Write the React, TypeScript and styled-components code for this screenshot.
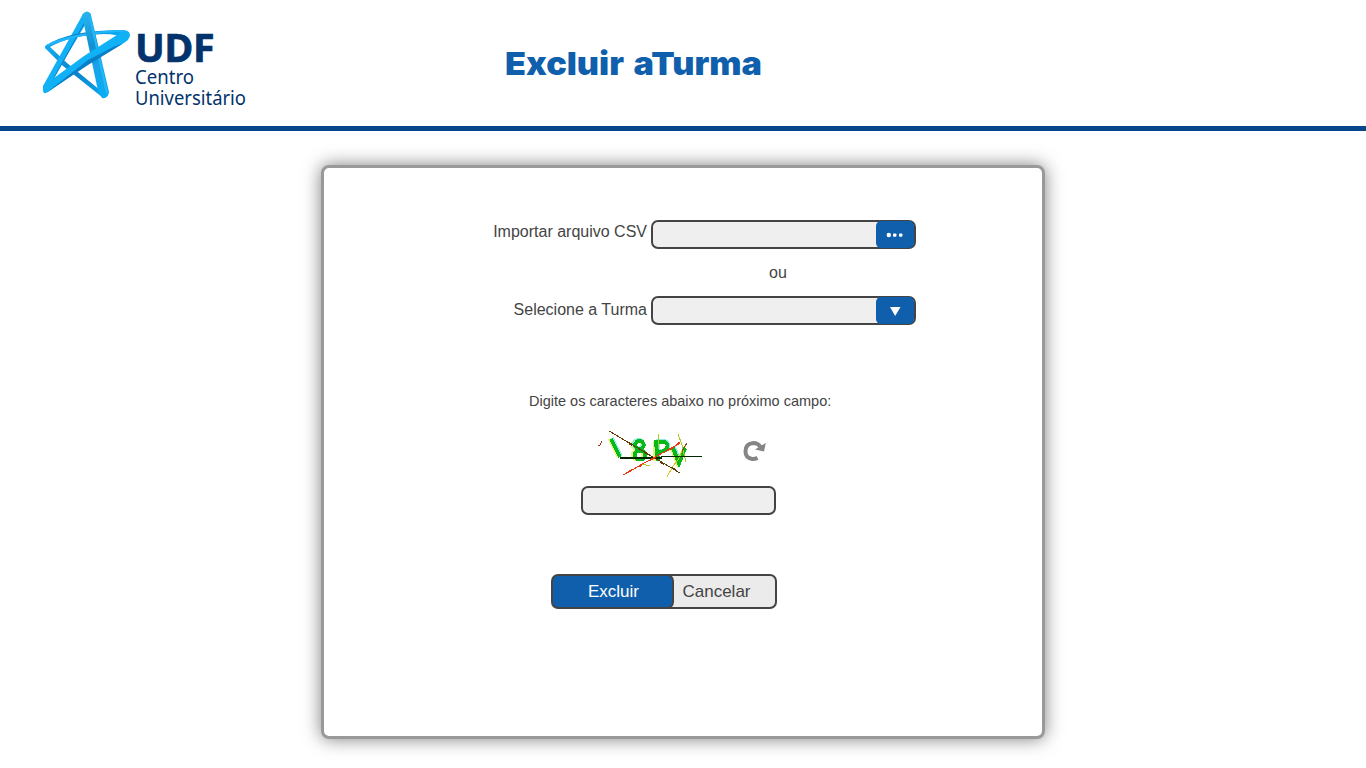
import React from "react";
import styled, { createGlobalStyle } from "styled-components";

const GlobalStyle = createGlobalStyle`
  * { box-sizing: border-box; }
  body { margin: 0; background: #fff; font-family: "Liberation Sans", Arial, sans-serif; color: #444; overflow: hidden; }
`;

const Page = styled.div`
  height: 768px;
  overflow: hidden;
`;

const Header = styled.header`
  display: flex;
  align-items: flex-start;
  height: 131px;
  border-bottom: 5px solid #08468c;
`;

const Logo = styled.svg`
  flex: none;
  width: 260px;
  height: 126px;
`;

const Title = styled.h1`
  margin: 46px 0 0 244.5px;
  font-family: Inter, "Liberation Sans", sans-serif;
  font-size: 32px;
  line-height: 36px;
  font-weight: 900;
  word-spacing: 2.5px;
  white-space: nowrap;
  color: #0f5fac;
  transform: scaleX(1.068);
  transform-origin: 0 0;
`;

const Card = styled.main`
  display: flex;
  flex-direction: column;
  width: 724px;
  height: 574px;
  margin: 34px auto 0;
  padding-top: 52px;
  border: 3px solid #999;
  border-radius: 8px;
  background: #fff;
  box-shadow: 0 0 18px rgba(0, 0, 0, 0.5);
`;

const FieldRow = styled.div`
  display: flex;
  height: 29px;
`;

const Label = styled.label<{ $top: number }>`
  width: 323px;
  padding-top: ${(p) => p.$top}px;
  margin-right: 4px;
  font-size: 16px;
  line-height: 18px;
  text-align: right;
  white-space: nowrap;
`;

const Field = styled.div<{ $width: number }>`
  display: flex;
  justify-content: flex-end;
  width: ${(p) => p.$width}px;
  height: 29px;
  border: 2px solid #444;
  border-radius: 7px;
  background: #efefef;
`;

const FieldButton = styled.button`
  width: 38px;
  height: 27px;
  margin: -1px 0;
  padding: 0;
  border: 0;
  border-radius: 5px;
  background: #0f5fac;
  svg { display: block; }
`;

const Separator = styled.div`
  height: 47px;
  padding: 15px 0 0 445px;
  font-size: 16px;
  line-height: 18px;
`;

const Hint = styled.p`
  margin: 67px 0 0 205px;
  font-size: 14.5px;
  line-height: 18px;
  white-space: nowrap;
`;

const CaptchaRow = styled.div`
  display: flex;
  margin: 15px 0 0 266px;
  height: 60px;
  svg { display: block; }
`;

const CodeField = styled(Field)`
  margin: 1px 0 0 257px;
`;

const Actions = styled.div`
  display: flex;
  margin: 59px 0 0 227px;
  height: 35px;
`;

const Action = styled.button<{ $primary?: boolean }>`
  position: relative;
  z-index: ${(p) => (p.$primary ? 1 : 0)};
  width: ${(p) => (p.$primary ? 123 : 119)}px;
  height: 35px;
  margin-left: ${(p) => (p.$primary ? 0 : -16)}px;
  padding: ${(p) => (p.$primary ? "0 0 0 2px" : "0 2px 0 0")};
  border: 2px solid #444;
  border-radius: 7px;
  background: ${(p) => (p.$primary ? "#0f5fac" : "#ebebeb")};
  color: ${(p) => (p.$primary ? "#fff" : "#444")};
  font: 17px/20px "Liberation Sans", Arial, sans-serif;
`;

const BrandLogo = () => (
  <Logo viewBox="0 0 260 126" role="img">
    <defs>
      <linearGradient id="edge" gradientUnits="userSpaceOnUse" x1="45" y1="47" x2="129" y2="33">
        <stop offset="0" stopColor="#0ea9f2" />
        <stop offset=".28" stopColor="#0b8cd2" />
        <stop offset=".5" stopColor="#0875b5" />
        <stop offset=".8" stopColor="#0aa5f0" />
      </linearGradient>
      <linearGradient id="thin" gradientUnits="userSpaceOnUse" x1="46" y1="48" x2="104" y2="97">
        <stop offset="0" stopColor="#13aaf0" />
        <stop offset=".5" stopColor="#0a83c9" />
        <stop offset="1" stopColor="#08a5f0" />
      </linearGradient>
      <linearGradient id="fall" gradientUnits="userSpaceOnUse" x1="87" y1="12" x2="104" y2="97">
        <stop offset="0" stopColor="#27b5ee" />
        <stop offset=".4" stopColor="#0f90d3" />
        <stop offset=".65" stopColor="#18a5e8" />
        <stop offset="1" stopColor="#08adf5" />
      </linearGradient>
    </defs>
    <path d="M45 48L63 66L102 97L106 95L67 63L49 46Z" fill="url(#thin)" />
    <path d="M83 14L43 86L46 91L49 86L88 20L91 14Q87 9 83 14Z" fill="#12b0f7" />
    <path d="M85 22L50 85" stroke="#087fc4" strokeWidth="1" />
    <path d="M45 46Q68 30 124 30Q130 31 129 37L121 38Q118 34 104 34Q70 35 48 48Q45 50 45 46Z" fill="url(#edge)" />
    <path d="M46 45Q75 31 124 30L126 32Q84 32 48 46Z" fill="#20b8fa" />
    <path d="M82 15Q87 9 91 15L109 92Q108 99 102 98L98 91Z" fill="url(#fall)" />
    <path d="M90 17L107 93" stroke="#20bafd" strokeWidth="2" />
    <path d="M43 86L84 56L117 35Q129 27 130 35Q130 40 122 44L88 64L48 92Q43 95 43 90Z" fill="#10b1f7" />
    <path d="M46 93L88 65L124 43L113 47L88 60Z" fill="#087fc6" />
    <text x="135" y="61.5" fontFamily="Open Sans, sans-serif" fontWeight="700" fontSize="39" letterSpacing="-.5" stroke="#02336c" strokeWidth=".7" textLength="79" lengthAdjust="spacingAndGlyphs" fill="#02336c">UDF</text>
    <text x="135" y="84" fontFamily="Noto Sans, sans-serif" fontSize="19" textLength="59" lengthAdjust="spacingAndGlyphs" fill="#02336c">Centro</text>
    <text x="135" y="105" fontFamily="Noto Sans, sans-serif" fontSize="19" textLength="111" lengthAdjust="spacingAndGlyphs" fill="#02336c">Universitário</text>
  </Logo>
);

const Captcha = () => (
  <svg width="190" height="60" viewBox="590 425 190 60" fill="none" shapeRendering="crispEdges">
    <g strokeWidth="4" stroke="#e9f57a" transform="translate(-1.5 0)">
      <path d="M611 439L620 457M656 441V461M673 448L679 463L686 448" />
      <ellipse cx="639" cy="445" rx="5" ry="4" /><ellipse cx="639.5" cy="455" rx="5.5" ry="4.5" />
    </g>
    <g strokeWidth="4" stroke="#8beee6" transform="translate(1 -1)">
      <path d="M611 439L620 457M657 461V442H664Q669 445 666 450L658 453M673 448L679 463" />
      <ellipse cx="637.5" cy="445" rx="4.5" ry="4" />
    </g>
    <g stroke="#08b719" strokeWidth="4">
      <path d="M611 439L620 457" />
      <ellipse cx="639.5" cy="445" rx="4.3" ry="4" /><ellipse cx="640" cy="455" rx="5.5" ry="4.5" />
      <path d="M658 461L656 442H664Q670 444 666 450L658 453M673 448L679 463L685 448" />
    </g>
    <g strokeWidth="1">
      <path d="M609 431L680 473" stroke="#603a05" />
      <path d="M623 475L680 443" stroke="#ed3510" />
      <path d="M598 445H600L602 441" stroke="#aa3010" />
      <path d="M667 477L673 466L678 460L683 449L687 444" stroke="#d7c51c" />
      <path d="M678 434L682 445L686 462M659 434L658 449M642 464L650 466" stroke="#aacb21" />
      <path d="M682 451L687 443" stroke="#795019" />
      <path d="M661 456.5H702" stroke="#022700" />
    </g>
    <path d="M620 458H662" stroke="#022700" strokeWidth="2" />
    <path d="M629 443L632 445M644 452L648 454M660 462L664 464M672 468L676 470" stroke="#603a05" strokeWidth="2" />
    <path d="M628 472L632 470M639 466L642 465M650 460L656 457M668 450L674 447M677 444L680 443" stroke="#ed3510" strokeWidth="2" />
    <g shapeRendering="geometricPrecision">
      <path d="M757.5 457.8Q755 459.3 752 459Q745.5 457.8 745.5 451.5Q745.5 443.5 753.5 443Q758 443 760.5 447" stroke="#858585" strokeWidth="4" />
      <path d="M755 449.5L759 447L765.8 443L764 451.5Z" fill="#858585" />
    </g>
  </svg>
);

export default function App() {
  return (
    <Page>
      <GlobalStyle />
      <Header>
        <BrandLogo />
        <Title>Excluir aTurma</Title>
      </Header>
      <Card>
        <FieldRow>
          <Label $top={3}>Importar arquivo CSV</Label>
          <Field $width={265}>
            <FieldButton>
              <svg width="38" height="27" viewBox="0 0 38 27" fill="#fff">
                <circle cx="12.8" cy="14" r="2.2" />
                <rect x="17" y="12.4" width="3.4" height="3.4" rx=".8" />
                <rect x="23" y="12.4" width="3.4" height="3.4" rx=".8" />
              </svg>
            </FieldButton>
          </Field>
        </FieldRow>
        <Separator>ou</Separator>
        <FieldRow>
          <Label $top={5}>Selecione a Turma</Label>
          <Field $width={265}>
            <FieldButton>
              <svg width="38" height="27" viewBox="0 0 38 27" fill="#fff">
                <path d="M14 10H24.5L19.2 19Z" />
              </svg>
            </FieldButton>
          </Field>
        </FieldRow>
        <Hint>Digite os caracteres abaixo no próximo campo:</Hint>
        <CaptchaRow>
          <Captcha />
        </CaptchaRow>
        <CodeField $width={195} />
        <Actions>
          <Action $primary>Excluir</Action>
          <Action>Cancelar</Action>
        </Actions>
      </Card>
    </Page>
  );
}
